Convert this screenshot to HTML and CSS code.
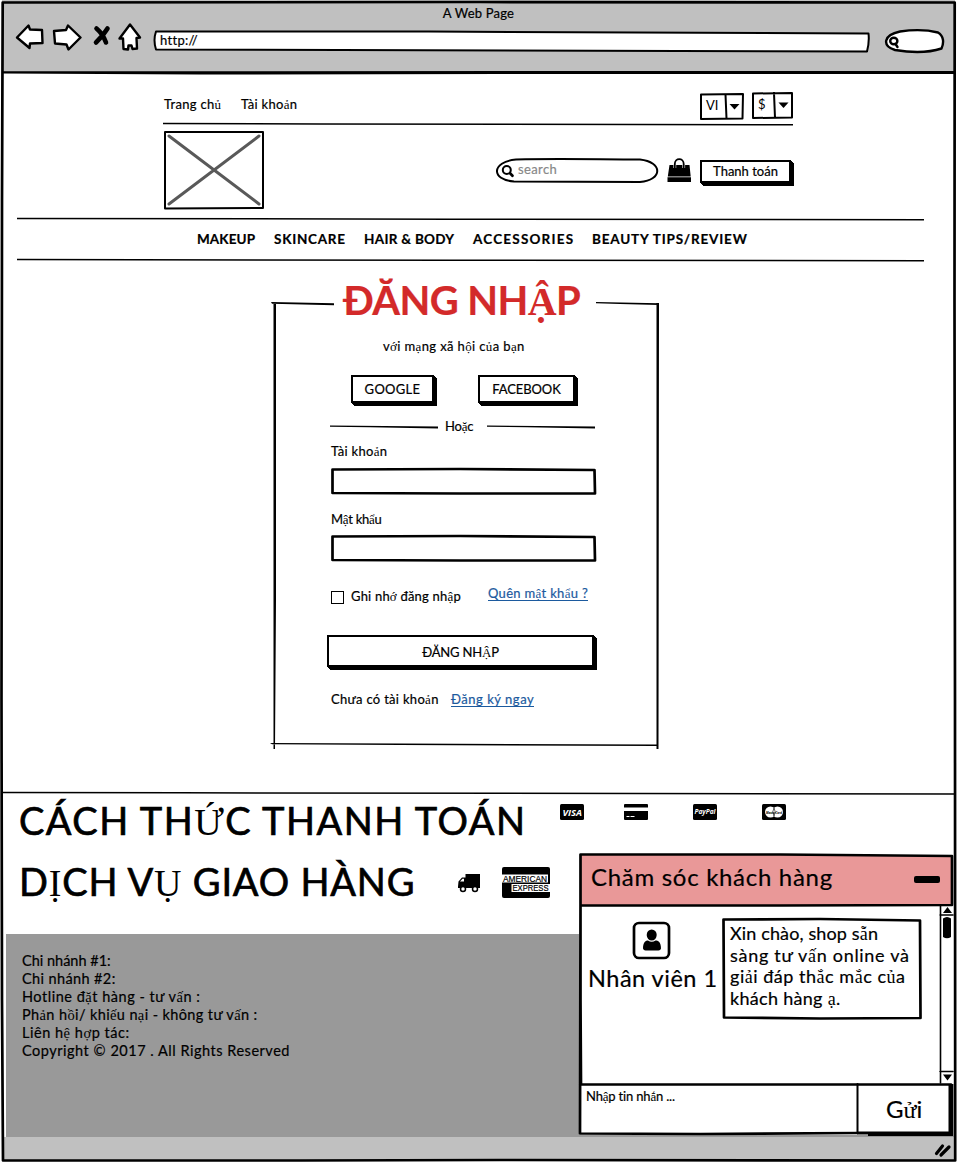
FILE: index.html
```html
<!DOCTYPE html>
<html lang="vi">
<head>
<meta charset="utf-8">
<title>A Web Page</title>
<link rel="stylesheet" href="styles.css">
</head>
<body>
<div class="window">
  <header class="chrome">
    <div class="chrome-title"><span class="t ls2">A Web Page</span></div>
    <div class="toolbar">
      <svg class="ic-back" viewBox="15 22 30 30"><path d="M17 37.5 28.500 25.500 30 29.500 42 30 42.500 43 30 43.500 29.500 48Z"/></svg>
      <svg class="ic-forward" viewBox="52 22 30 30"><path d="M54 31 66 30 68 25.500 80.500 37.500 68.500 49.500 66.500 44.500 55 43.500Z"/></svg>
      <svg class="ic-stop" viewBox="92 22 20 30"><path d="M96.500 28.500 Q103 34 106 42.500M107.500 28.500 Q103 36 96 42.500"/></svg>
      <svg class="ic-home" viewBox="117 22 26 30"><path d="M130 24.500 140 37.500 136.500 38 137 48.500 132.500 49 131.500 45.500 128.500 45.500 128 49.500 123.500 49 123 38.500 119.500 38.500Z"/></svg>
      <div class="address">
        <svg class="frame" viewBox="152 28 720 26" preserveAspectRatio="none"><path class="s2 fill" d="M156 31.500 C400 31 600 32 868.500 33.500 Q869.500 42 867 51.500 L156 49.500 Q153 40 156 31.500Z"/></svg>
        <span class="t ls3">http://</span>
      </div>
      <svg class="ic-find" viewBox="883 27 64 28"><path d="M900 31.500 C914 29.500 926 29.500 938 32.500 C944 36 944 43 941.500 48.500 C928 53 910 52.500 895 50 C882 46 883 35 900 31.500Z"/><ellipse cx="893.800" cy="41" rx="3.600" ry="3.200"/><path d="M895.500 44 897.500 47"/></svg>
    </div>
  </header>

  <main>
    <div class="topbar">
      <a class="t link-home ls3">Trang ch<i>ủ</i></a>
      <a class="t link-account ls3">Tài kho<i>ả</i>n</a>
      <div class="select lang"><b>VI</b>
        <svg class="frame" viewBox="699 92 46 28"><path class="s2" d="M701 94.500 743 94 742.500 118.500 701 119ZM725.500 94.500 726.500 118.500"/><path d="M729.500 104H739.500L734.500 109.500Z"/></svg></div>
      <div class="select cash"><b>$</b>
        <svg class="frame" viewBox="751 91 43 28"><path class="s2" d="M753 93.500 792 93 792 117.500 753 118ZM774 93 775 118"/><path d="M778.500 102.500H788.500L783.500 108Z"/></svg></div>
    </div>
    <svg class="rule short" viewBox="163 122 630 5"><path d="M163 123.500 320 124 793 124.700"/></svg>
    <div class="brand">
      <svg class="logo" viewBox="163 130 102 80"><path class="s2" d="M165 132 263 132 263 208 165 208.500Z"/><path class="cross" d="M169 136 259 204M259 136 169 204"/></svg>
      <div class="search">
        <svg class="frame" viewBox="495 157 164 27"><path class="s2" d="M516 159.500 C560 158.500 600 159.500 640 159.500 C663 162 663 180 640 182 L514 181.500 C491 180 491 162 516 159.500Z"/><circle class="s2" cx="506.800" cy="170" r="4"/><path class="s3" d="M510.300 173.500 512.500 175.800"/></svg>
        <span class="t ls4">search</span>
      </div>
      <svg class="bag" viewBox="666 157 26 28"><path d="M669.500 165H689.500L690.700 176.500H667.800ZM667.500 177.300H691V182H667.500Z"/><path class="halo" d="M674.800 168V164C674.800 157.500 683.700 157.500 683.700 164V168"/><path class="handle" d="M674.800 168V164C674.800 157.500 683.700 157.500 683.700 164V168"/></svg>
      <button class="btn checkout"><span class="t">Thanh toán</span></button>
    </div>
    <svg class="rule wide" viewBox="17 217 907 5"><path d="M17 218.400 450 219.200 924 219.700"/></svg>
    <nav class="menu">
      <a class="t m1">MAKEUP</a><a class="t m2">SKINCARE</a><a class="t m3">HAIR &amp; BODY</a><a class="t m4">ACCESSORIES</a><a class="t m5">BEAUTY TIPS/REVIEW</a>
    </nav>
    <svg class="rule wide" viewBox="17 259 907 5"><path d="M17 259.600 450 260.300 924 260.700"/></svg>

    <section class="login">
      <svg class="frame" viewBox="270 264 390 527"><path d="M271 302 334 303.300 334 305.300 272 303.800ZM596 302 659 303.200 659 305 620 304 596 303.200ZM273.500 303 276 303 276 600 275 749 273.500 749ZM656.500 303 659 303 658.500 749 656.500 749ZM270 743 400 743.500 657 744.500 657 746 400 745 272 744.300Z"/></svg>
      <h1><span class="t">ĐĂNG NH<i>Ậ</i>P</span></h1>
      <p class="sub"><span class="t">v<i>ớ</i>i m<i>ạ</i>ng xã h<i>ộ</i>i c<i>ủ</i>a b<i>ạ</i>n</span></p>
      <div class="social">
        <button class="btn google"><span class="t ls3">GOOGLE</span></button>
        <button class="btn facebook"><span class="t">FACEBOOK</span></button>
      </div>
      <div class="or">
        <svg viewBox="330 424 108 6"><path d="M330 426.500 438 427.500 438 429.500 370 428.300 330 427.700Z"/></svg>
        <span class="t">Ho<i>ặ</i>c</span>
        <svg viewBox="487 424 108 6"><path d="M487 426.500 595 427.500 595 429.500 527 428.300 487 427.700Z"/></svg>
      </div>
      <label class="t l1 ls3">Tài kho<i>ả</i>n</label>
      <div class="field"><svg class="frame" viewBox="330 467 267 29"><path class="s3" d="M332.500 469.500 460 469 594.500 470 595 493.500 460 493.500 332.500 493Z"/></svg></div>
      <label class="t l2">M<i>ậ</i>t kh<i>ẩ</i>u</label>
      <div class="field"><svg class="frame" viewBox="330 534 267 29"><path class="s3" d="M332.500 536.500 460 536 594.500 537 595 560.500 460 560.500 332.500 560Z"/></svg></div>
      <div class="remember">
        <span class="check"></span><span class="t ls2">Ghi nh<i>ớ</i> đăng nh<i>ậ</i>p</span><a class="forgot"><span class="t ls3">Quên m<i>ậ</i>t kh<i>ẩ</i>u ?</span></a>
      </div>
      <button class="btn submit"><span class="t">ĐĂNG NH<i>Ậ</i>P</span></button>
      <div class="signup"><span class="t ls3">Chưa có tài kho<i>ả</i>n</span><a><span class="t ls5">Đăng ký ngay</span></a></div>
    </section>

    <svg class="rule full" viewBox="3 791 952 5"><path d="M3 792.500 180 792.800 955 794"/></svg>
    <div class="pay">
      <h2 class="t">CÁCH TH<i>Ứ</i>C THANH TOÁN</h2>
      <svg class="card" viewBox="0 0 24 16"><rect width="24" height="16" rx="1.500"/><text x="2.500" y="11.500" textLength="19.500" lengthAdjust="spacingAndGlyphs" class="visa">VISA</text></svg>
      <svg class="card" viewBox="0 0 24 16"><path d="M1 0H23Q24 0 24 1V3.500H0V1Q0 0 1 0ZM0 7H24V15Q24 16 23 16H1Q0 16 0 15Z"/><path class="dash" d="M2.500 12.500H5.500M6.500 12.500H10.500"/></svg>
      <svg class="card" viewBox="0 0 24 16"><rect width="24" height="16" rx="1.500"/><text x="1.500" y="10" textLength="21" lengthAdjust="spacingAndGlyphs" class="paypal">PayPal</text></svg>
      <svg class="card" viewBox="0 0 24 16"><rect width="24" height="16" rx="1.500"/><circle cx="8.500" cy="8" r="5.500" fill="#fff"/><circle cx="15.500" cy="8" r="5.500" fill="#fff"/><path class="mc" d="M12 3.800Q9.500 8 12 12.200Q14.500 8 12 3.800"/><text x="4" y="9.500" textLength="16" lengthAdjust="spacingAndGlyphs" class="master">MasterCard</text></svg>
    </div>
    <div class="ship">
      <h2 class="t">D<i>Ị</i>CH V<i>Ụ</i> GIAO HÀNG</h2>
      <svg class="truck" viewBox="0 0 24 20"><path d="M8.500 1H23V15H1V13.500L1.500 8.500 5 4.500H8.500Z"/><path d="M3 8.500 5.500 5.800H7V8.500Z" fill="#fff"/><circle class="wheel" cx="6" cy="16" r="2.500"/><circle class="wheel" cx="18" cy="16" r="2.500"/></svg>
      <svg class="amex" viewBox="0 0 48 32"><rect width="48" height="31" rx="2"/><path d="M0 7.500H46V15.500H0ZM9.500 17H48V25H9.500Z" fill="#fff"/><text x="1" y="14.500" textLength="44" lengthAdjust="spacingAndGlyphs">AMERICAN</text><text x="10.500" y="24.200" textLength="36" lengthAdjust="spacingAndGlyphs">EXPRESS</text></svg>
    </div>
    <footer class="info">
      <p class="t">Chi nhánh #1:</p>
      <p class="t ls4">Chi nhánh #2:</p>
      <p class="t ls5">Hotline đ<i>ặ</i>t hàng - tư v<i>ấ</i>n :</p>
      <p class="t ls4">Ph<i>ả</i>n h<i>ồ</i>i/ khi<i>ế</i>u n<i>ạ</i>i - không tư v<i>ấ</i>n :</p>
      <p class="t ls5">Liên h<i>ệ</i> h<i>ợ</i>p tác:</p>
      <p class="t ls5">Copyright © 2017 . All Rights Reserved</p>
    </footer>
  </main>

  <div class="status"><svg viewBox="933 1141 20 18"><path d="M936.500 1153.500 942.500 1146M941 1155 949 1147"/></svg></div>

  <aside class="chat">
    <header class="chat-head"><span class="t">Chăm sóc khách hàng</span><span class="minimize"></span></header>
    <div class="chat-body">
      <div class="agent">
        <svg viewBox="632 921 40 40"><rect class="s3" x="634" y="923" width="35" height="35" rx="5"/><ellipse cx="651.700" cy="935" rx="5" ry="5.500"/><path d="M643 948.500C643 942 646 940.500 648 940.500Q651.700 943 655.500 940.500C658 940.500 661 942 661 948.500Q660.500 950.500 658.500 950.500H645.500Q643.500 950.500 643 948.500Z"/></svg>
        <span class="t">Nhân viên 1</span>
      </div>
      <div class="bubble">
        <svg class="frame" viewBox="721 917 202 103"><path class="s3" d="M723.500 919.500 820 919 920 920.500 920.500 1018 820 1018.500 724 1017.500Z"/></svg>
        <p class="t b1">Xin chào, shop s<i>ẵ</i>n</p>
        <p class="t b2">sàng tư v<i>ấ</i>n online và</p>
        <p class="t ls5">gi<i>ả</i>i đáp th<i>ắ</i>c m<i>ắ</i>c c<i>ủ</i>a</p>
        <p class="t ls3">khách hàng <i>ạ</i>.</p>
      </div>
      <svg class="scroll" viewBox="939 905 15 179"><path class="line" d="M940.500 905V1083M940 915H953M940 1071.500H953"/><path d="M943 913 947.500 907 952 913ZM943 1074.500H952L947.500 1080.500ZM943 918.500Q947 915.500 951 918.500V937Q947 939.500 943 937Z"/></svg>
    </div>
    <div class="chat-input">
      <div class="message"><span class="t">Nh<i>ậ</i>p tin nh<i>ắ</i>n ...</span></div>
      <div class="send"><span class="t">G<i>ử</i>i</span></div>
    </div>
    <svg class="frame" viewBox="578 852 379 285"><path class="s3" d="M581 1084 580.500 1000 580.500 854.500 780 854.500 952 856V905L780 905.500 581 905.500M580.500 905 580 1133.500 700 1134 857 1133M580 1084.500H951"/><path class="s2" d="M857.500 1084V1133"/><path d="M948.500 1084H953V1136L868 1136V1132.500H948.500ZM857 1131.500H950V1134.500H857Z"/></svg>
  </aside>
  <svg class="frame" viewBox="0 0 957 1163"><path class="s3" d="M2.700 2.500 480 2 954.700 2.500 954.500 300 955 700 955.200 1160.500 500 1160 300 1160.500 3 1160.500 2 1000 1.500 700 2 200Z"/><path d="M3 71.200 955 71V74L500 74 200 74.500 3 73.500Z"/></svg>
</div>
</body>
</html>
```
FILE: styles.css
```css
* { box-sizing: border-box; }
body { margin: 0; background: #fff; color: #000; font: 13px/20px Lato, "Liberation Sans", sans-serif; }
h1, h2, p { margin: 0; font-weight: 400; }
i { font-family: "Liberation Serif", serif; font-style: normal; line-height: 0; -webkit-text-stroke: 0; }
button { font: inherit; color: inherit; padding: 0; }
svg { display: block; flex: none; }
.t { white-space: nowrap; -webkit-text-stroke: .2px; }
.ls2 { letter-spacing: .2px; }
.ls3 { letter-spacing: .3px; }
.ls4 { letter-spacing: .38px; }
.ls5 { letter-spacing: .52px; }
.window { position: relative; width: 957px; height: 1163px; overflow: hidden; }

.frame { position: absolute; inset: 0; width: 100%; height: 100%; pointer-events: none; }
.s2, .s3, .line { fill: none; stroke: #000; stroke-width: 2; stroke-linejoin: round; stroke-linecap: round; }
.s3 { stroke-width: 2.7; }
.line { stroke-width: 1.6; }
.fill { fill: #fff; }

.chrome { height: 73px; margin: 0 2px; padding-left: 13px; background: #c0c0c0; }
.chrome-title { height: 22px; margin-left: -13px; line-height: 26px; text-align: center; }
.toolbar { display: flex; }
.toolbar > svg { height: 30px; fill: #fff; stroke: #000; stroke-width: 2.4; stroke-linejoin: round; stroke-linecap: round; }
.ic-back { width: 30px; }
.ic-forward { width: 30px; margin-left: 7px; }
.toolbar .ic-stop { width: 20px; margin-left: 10px; fill: none; stroke-width: 4.600; }
.ic-home { width: 26px; margin-left: 5px; }
.address { position: relative; width: 720px; height: 26px; margin: 6px 0 0 9px; padding-left: 8px; line-height: 24px; }
.address .t { position: relative; }
.toolbar .ic-find { width: 64px; height: 28px; margin: 5px 0 0 11px; }

.topbar { display: flex; height: 49px; padding: 18px 0 0 164px; }
.topbar a { line-height: 26px; }
.link-home { width: 77px; }
.select { position: relative; width: 46px; height: 28px; padding-left: 7px; line-height: 27px; }
.select b { font-weight: 400; }
.lang { margin-left: auto; margin-top: 1px; }
.cash { width: 43px; margin: 0 163px 0 6px; }
.rule { height: 5px; fill: none; stroke: #000; stroke-width: 1.500; overflow: visible; }
.short { width: 630px; margin-left: 163px; }
.wide { width: 907px; margin-left: 17px; }
.full { width: 952px; margin-left: 3px; }

.brand { display: flex; height: 90px; padding: 3px 0 0 163px; }
.logo { width: 102px; height: 80px; }
.cross { fill: none; stroke: #595959; stroke-width: 3; stroke-linecap: round; }
.search { position: relative; width: 164px; height: 27px; margin: 27px 0 0 230px; padding-left: 23px; line-height: 25px; color: #888; }
.bag { width: 26px; height: 28px; margin: 27px 0 0 7px; }
.handle, .halo { fill: none; stroke: #000; stroke-width: 1.8; }
.halo { stroke: #fff; stroke-width: 2.8; }
.btn { display: flex; align-items: center; justify-content: center; background: #fff; border: 2px solid #000; box-shadow: 1px 1px #000, 2px 2px #000, 3px 3px #000; }
.checkout { width: 91px; height: 23px; margin: 30px 0 0 8px; padding-bottom: 2px; }

.menu { display: flex; height: 37px; padding: 7px 0 0 197px; font-size: 13.500px; font-weight: 700; }
.m1 { width: 77px; letter-spacing: .1px; }
.m2 { width: 90px; letter-spacing: .74px; }
.m3 { width: 109px; letter-spacing: .3px; }
.m4 { width: 119px; letter-spacing: 1.200px; }
.m5 { letter-spacing: .82px; }

.login { position: relative; width: 390px; height: 527px; margin-left: 270px; padding: 12px 0 0 61px; }
.login h1 { height: 48px; margin-left: 12px; line-height: 48px; font-size: 40px; font-weight: 700; letter-spacing: -.6px; color: #d32a2a; }
.sub { margin: 12px 0 0 52px; letter-spacing: .37px; }
.social { display: flex; margin-top: 19px; padding-left: 20px; }
.google { width: 83px; height: 28px; }
.facebook { width: 97px; height: 28px; margin-left: 44px; letter-spacing: -.1px; }
.or { display: flex; align-items: center; height: 20px; margin: 13px 0 0 -1px; }
.or svg { width: 108px; height: 6px; }
.or .t { width: 42px; margin-left: 7px; letter-spacing: -.2px; }
.login label { display: block; }
.l1 { margin-top: 5px; }
.field { position: relative; width: 267px; height: 29px; margin: 6px 0 0 -1px; }
.l2 { margin-top: 13px; letter-spacing: -.3px; }
.l2 + .field { margin-top: 5px; }
.remember { display: flex; height: 24px; margin-top: 20px; line-height: 26px; }
.check { width: 13px; height: 13px; margin: 8px 7px 0 0; border: 1px solid #000; }
.remember > .t { width: 137px; }
.login a { color: #1c5a9e; }
.forgot { height: 18px; line-height: 20px; border-bottom: 1px solid #1c5a9e; }
.submit { width: 267px; height: 32px; margin: 28px 0 0 -4px; padding-top: 2px; letter-spacing: -.2px; }
.signup { display: flex; margin-top: 22px; }
.signup > .t { width: 120px; }
.signup a { height: 18px; border-bottom: 1px solid #1c5a9e; }

.pay, .ship { display: flex; padding-left: 19px; }
.pay { height: 57px; }
.ship { height: 81px; }
h2 { font-size: 38px; line-height: 49px; }
h2.t { -webkit-text-stroke: .7px; }
h2 i { -webkit-text-stroke: 0; }
.pay h2 { width: 541px; letter-spacing: 1.480px; }
.ship h2 { width: 438px; margin-top: 4px; letter-spacing: .82px; }
.card { width: 24px; height: 16px; margin: 8px 45px 0 0; }
.card:nth-of-type(1) { margin-right: 40px; }
.card text { fill: #fff; font-family: "Open Sans", sans-serif; font-style: italic; font-weight: 700; }
.visa { font-size: 9px; }
.paypal { font-size: 6.500px; }
.card .master { font-size: 4px; fill: #000; }
.dash { stroke: #fff; stroke-width: 1; }
.mc { fill: none; stroke: #000; stroke-width: .6; }
.truck { width: 24px; height: 20px; margin: 20px 21px 0 0; }
.wheel { fill: #fff; stroke: #000; stroke-width: 1.500; }
.amex { width: 48px; height: 32px; margin-top: 14px; }
.amex text { font: 8.500px "Liberation Sans", sans-serif; stroke: #000; stroke-width: .2; }

.info { width: 948px; height: 203px; margin-left: 6px; padding: 18px 0 0 16px; background: #999; font-size: 14.500px; line-height: 18px; }
.status { height: 24px; margin: 0 2px; padding-top: 4px; background: #c0c0c0; }
.status svg { width: 20px; height: 18px; margin-left: 931px; fill: none; stroke: #000; stroke-width: 3.200; stroke-linecap: round; }

.chat { position: absolute; left: 578px; top: 852px; width: 379px; height: 285px; }
.chat::before { content: ""; display: block; height: 3px; }
.chat-head { display: flex; justify-content: space-between; width: 372px; height: 50px; margin-left: 2px; padding: 0 12px 0 11px; background: #e99898; font-size: 24px; letter-spacing: .7px; line-height: 44px; }
.minimize { width: 26px; height: 7px; margin-top: 21px; border-radius: 2px; background: #000; }
.chat-body { display: flex; width: 376px; height: 179px; margin-left: 1px; padding-left: 9px; background: #fff; }
.agent { width: 133px; padding-top: 16px; font-size: 23.500px; letter-spacing: .5px; line-height: 34px; }
.agent svg { width: 40px; height: 40px; margin-left: 44px; }
.bubble { position: relative; width: 202px; height: 103px; margin-top: 12px; padding: 6px 0 0 9px; font-size: 18px; line-height: 21.700px; }
.b1 { letter-spacing: .13px; }
.b2 { letter-spacing: .71px; }
.scroll { width: 15px; height: 179px; margin-left: 16px; }
.chat-input { display: flex; width: 374px; height: 51px; margin-left: 1px; background: #fff; }
.message { width: 279px; padding: 2px 0 0 7px; letter-spacing: -.18px; }
.send { padding-left: 28px; font-size: 24px; line-height: 49px; }
```
